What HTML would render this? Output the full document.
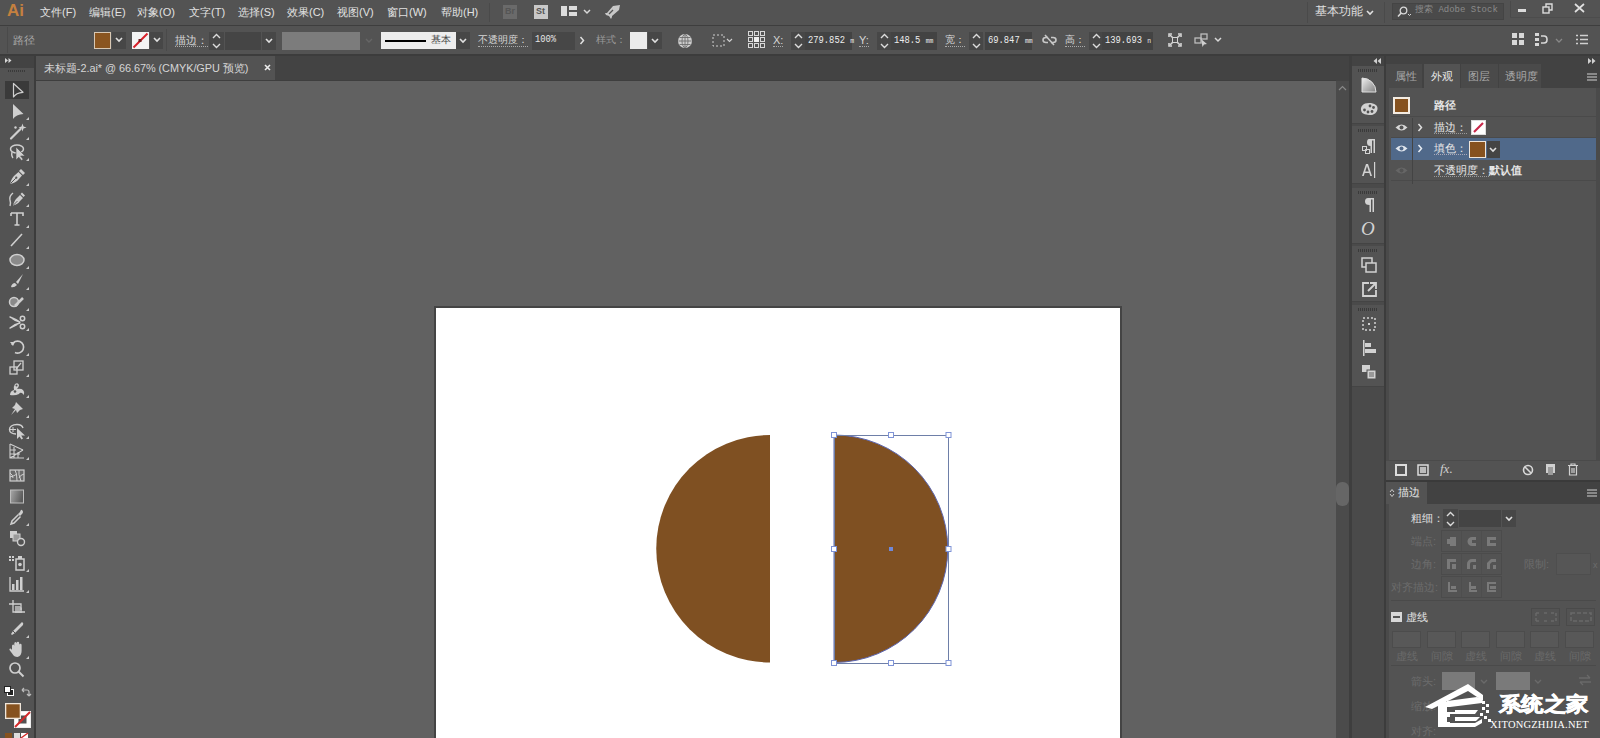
<!DOCTYPE html>
<html><head><meta charset="utf-8">
<style>
*{margin:0;padding:0;box-sizing:border-box}
html,body{width:1600px;height:738px;overflow:hidden;background:#535353;font-family:"Liberation Sans",sans-serif;color:#d6d6d6}
.a{position:absolute}
.t{position:absolute;white-space:nowrap;font-size:12px;line-height:14px}
svg{position:absolute;overflow:visible}
</style></head><body>

<!-- MENU BAR -->
<div class="a" style="left:0;top:0;width:1600px;height:25px;background:#535353"></div>
<div class="a" style="left:0;top:25px;width:1600px;height:1px;background:#3e3e3e"></div>
<div class="t" style="left:7px;top:2px;font-size:17px;line-height:18px;color:#c4803f;font-weight:bold">Ai</div>
<div class="t" style="left:40px;top:5px;font-size:11px;color:#e2e2e2">文件(F)</div>
<div class="t" style="left:89px;top:5px;font-size:11px;color:#e2e2e2">编辑(E)</div>
<div class="t" style="left:137px;top:5px;font-size:11px;color:#e2e2e2">对象(O)</div>
<div class="t" style="left:189px;top:5px;font-size:11px;color:#e2e2e2">文字(T)</div>
<div class="t" style="left:238px;top:5px;font-size:11px;color:#e2e2e2">选择(S)</div>
<div class="t" style="left:287px;top:5px;font-size:11px;color:#e2e2e2">效果(C)</div>
<div class="t" style="left:337px;top:5px;font-size:11px;color:#e2e2e2">视图(V)</div>
<div class="t" style="left:387px;top:5px;font-size:11px;color:#e2e2e2">窗口(W)</div>
<div class="t" style="left:441px;top:5px;font-size:11px;color:#e2e2e2">帮助(H)</div>
<div class="a" style="left:489px;top:3px;width:1px;height:19px;background:#4a4a4a"></div>
<div class="a" style="left:503px;top:5px;width:14px;height:14px;background:#6a6a6a"></div>
<div class="t" style="left:505px;top:6px;font-size:9px;line-height:11px;color:#555;font-weight:bold">Br</div>
<div class="a" style="left:534px;top:5px;width:14px;height:14px;background:#c8c8c8"></div>
<div class="t" style="left:536px;top:6px;font-size:9px;line-height:11px;color:#555;font-weight:bold">St</div>
<svg style="left:561px;top:6px" width="16" height="11"><g fill="#dcdcdc"><rect x="0" y="0" width="6" height="10"/><rect x="8" y="0" width="8" height="4"/><rect x="8" y="6" width="8" height="4"/></g></svg>
<svg style="left:583px;top:9px" width="8" height="6"><path d="M1 1L4 4L7 1" stroke="#d8d8d8" stroke-width="1.5" fill="none"/></svg>
<svg style="left:604px;top:4px" width="17" height="16"><path d="M16 1L9 2L3 9L1 9L2 11L5 12L7 15L8 13L8 12L15 6Z" fill="#c8c8c8"/><path d="M5 10L9 6" stroke="#535353" stroke-width="1.2"/></svg>
<!-- right side -->
<div class="a" style="left:1307px;top:2px;width:1px;height:21px;background:#4a4a4a"></div>
<div class="t" style="left:1315px;top:4px;font-size:11.5px;color:#e0e0e0">基本功能</div>
<svg style="left:1366px;top:10px" width="8" height="6"><path d="M1 1L4 4L7 1" stroke="#e0e0e0" stroke-width="1.6" fill="none"/></svg>
<div class="a" style="left:1384px;top:2px;width:1px;height:21px;background:#4a4a4a"></div>
<div class="a" style="left:1392px;top:3px;width:112px;height:17px;background:#4a4a4a;border:1px solid #444"></div>
<svg style="left:1396px;top:6px" width="16" height="12"><circle cx="7.5" cy="4.5" r="3.3" stroke="#d8d8d8" stroke-width="1.3" fill="none"/><path d="M5.2 7L2 10.5" stroke="#d8d8d8" stroke-width="1.6"/><path d="M12 8L13.5 9.5L15 8" stroke="#d8d8d8" fill="none"/></svg>
<div class="t" style="left:1415px;top:5px;font-size:9px;line-height:11px;color:#8a8a8a;font-family:'Liberation Mono',monospace">搜索 Adobe Stock</div>
<div class="a" style="left:1510px;top:1px;width:1px;height:16px;background:#4a4a4a"></div>
<div class="a" style="left:1518px;top:9px;width:8px;height:3px;background:#dcdcdc"></div>
<svg style="left:1542px;top:3px" width="12" height="11"><g stroke="#dcdcdc" stroke-width="1.4" fill="none"><rect x="1" y="4" width="6" height="6"/><path d="M4 4V1H10V7H7"/></g></svg>
<svg style="left:1574px;top:3px" width="11" height="10"><path d="M1 1L10 9M10 1L1 9" stroke="#e0e0e0" stroke-width="1.7"/></svg>
<div class="a" style="left:1510px;top:17px;width:90px;height:1px;background:#4c4c4c"></div>

<!-- CONTROL BAR -->
<div class="a" style="left:0;top:26px;width:1600px;height:29px;background:#535353"></div>
<div class="a" style="left:0;top:54px;width:1600px;height:2px;background:#3c3c3c"></div>
<div class="t" style="left:13px;top:33px;font-size:11px;color:#a8a8a8">路径</div>
<div class="a" style="left:7px;top:27px;width:1px;height:26px;background:#4a4a4a"></div>
<!-- fill swatch -->
<div class="a" style="left:94px;top:32px;width:17px;height:17px;background:#d8c8b4"></div>
<div class="a" style="left:95px;top:33px;width:15px;height:15px;background:#8a5520"></div>
<div class="a" style="left:112px;top:32px;width:14px;height:17px;background:#474747"></div>
<svg style="left:115px;top:37px" width="8" height="6"><path d="M1 1L4 4L7 1" stroke="#e0e0e0" stroke-width="1.6" fill="none"/></svg>
<!-- stroke swatch -->
<div class="a" style="left:132px;top:32px;width:17px;height:17px;background:#f4f4f4"></div>
<svg style="left:132px;top:32px" width="17" height="17"><path d="M1.5 15.5L15.5 1.5" stroke="#d8202a" stroke-width="2"/><rect x="6.5" y="7" width="3" height="3" fill="#702020"/></svg>
<div class="a" style="left:150px;top:32px;width:13px;height:17px;background:#474747"></div>
<svg style="left:153px;top:37px" width="8" height="6"><path d="M1 1L4 4L7 1" stroke="#e0e0e0" stroke-width="1.6" fill="none"/></svg>
<div class="a" style="left:166px;top:29px;width:1px;height:22px;background:#4a4a4a"></div>
<div class="t" style="left:175px;top:34px;font-size:10.5px;border-bottom:1px dotted #aaa;line-height:12px">描边：</div>
<div class="a" style="left:209px;top:32px;width:15px;height:18px;background:#474747"></div>
<svg style="left:212px;top:33px" width="9" height="16"><path d="M1 5L4.5 1.5L8 5M1 11L4.5 14.5L8 11" stroke="#dcdcdc" stroke-width="1.4" fill="none"/></svg>
<div class="a" style="left:225px;top:32px;width:36px;height:18px;background:#454545"></div>
<div class="a" style="left:262px;top:32px;width:14px;height:18px;background:#474747"></div>
<svg style="left:265px;top:38px" width="8" height="6"><path d="M1 1L4 4L7 1" stroke="#e0e0e0" stroke-width="1.6" fill="none"/></svg>
<div class="a" style="left:282px;top:32px;width:78px;height:18px;background:#7c7c7c"></div>
<svg style="left:365px;top:38px" width="8" height="6"><path d="M1 1L4 4L7 1" stroke="#666" stroke-width="1.4" fill="none"/></svg>
<!-- stroke style -->
<div class="a" style="left:381px;top:32px;width:75px;height:17px;background:#ededed"></div>
<div class="a" style="left:385px;top:40px;width:41px;height:2px;background:#000"></div>
<div class="t" style="left:431px;top:34px;font-size:10px;line-height:12px;color:#444">基本</div>
<div class="a" style="left:456px;top:32px;width:14px;height:17px;background:#474747"></div>
<svg style="left:459px;top:38px" width="8" height="6"><path d="M1 1L4 4L7 1" stroke="#e0e0e0" stroke-width="1.6" fill="none"/></svg>
<div class="t" style="left:478px;top:34px;font-size:10px;line-height:12px;border-bottom:1px dotted #aaa">不透明度：</div>
<div class="a" style="left:532px;top:32px;width:43px;height:18px;background:#474747"></div>
<div class="t" style="left:535px;top:33px;font-family:'Liberation Mono',monospace;font-size:11px;line-height:12px;color:#e8e8e8;transform:scaleX(0.8);transform-origin:0 0">100%</div>
<svg style="left:579px;top:36px" width="6" height="9"><path d="M1.5 1L4.5 4.5L1.5 8" stroke="#e0e0e0" stroke-width="1.5" fill="none"/></svg>
<div class="t" style="left:596px;top:34px;font-size:9.5px;line-height:12px;color:#9a9a9a">样式：</div>
<div class="a" style="left:630px;top:32px;width:17px;height:17px;background:#ececec"></div>
<div class="a" style="left:648px;top:32px;width:14px;height:17px;background:#474747"></div>
<svg style="left:651px;top:38px" width="8" height="6"><path d="M1 1L4 4L7 1" stroke="#e0e0e0" stroke-width="1.6" fill="none"/></svg>
<!-- globe -->
<svg style="left:677px;top:33px" width="16" height="16"><circle cx="8" cy="8" r="7" fill="#cdcdcd"/><g stroke="#6e6e6e" stroke-width="0.9" fill="none"><path d="M1.5 8H14.5M8 1.5V14.5M2.5 4.5H13.5M2.5 11.5H13.5"/><ellipse cx="8" cy="8" rx="3" ry="6.5"/></g></svg>
<!-- select rect icon -->
<svg style="left:712px;top:34px" width="22" height="13"><rect x="1" y="1" width="11" height="11" fill="none" stroke="#cfcfcf" stroke-dasharray="2 2"/><path d="M15 5L17.5 7.5L20 5" stroke="#cfcfcf" stroke-width="1.2" fill="none"/></svg>
<!-- ref point -->
<svg style="left:748px;top:31px" width="18" height="18"><g fill="none" stroke="#d8d8d8" stroke-width="1"><rect x="0.5" y="0.5" width="4" height="4"/><rect x="6.5" y="0.5" width="4" height="4"/><rect x="12.5" y="0.5" width="4" height="4"/><rect x="0.5" y="6.5" width="4" height="4"/><rect x="12.5" y="6.5" width="4" height="4"/><rect x="0.5" y="12.5" width="4" height="4"/><rect x="6.5" y="12.5" width="4" height="4"/><rect x="12.5" y="12.5" width="4" height="4"/></g><rect x="6" y="6" width="5" height="5" fill="#eee"/></svg>
<div class="t" style="left:773px;top:34px;font-size:11px;line-height:12px;border-bottom:1px dotted #aaa">X:</div>
<div class="a" style="left:791px;top:32px;width:14px;height:18px;background:#474747"></div><svg style="left:794px;top:33px" width="9" height="16"><path d="M1 5L4.5 1.5L8 5M1 11L4.5 14.5L8 11" stroke="#dcdcdc" stroke-width="1.4" fill="none"/></svg>
<div class="a" style="left:805px;top:32px;width:47px;height:18px;background:#434343"></div><div class="t" style="left:808px;top:34px;font-family:'Liberation Mono',monospace;font-size:11px;line-height:12px;color:#ececec;transform:scaleX(0.8);transform-origin:0 0">279.852 <span style="font-size:8px">m</span></div>
<div class="t" style="left:859px;top:34px;font-size:11px;line-height:12px;border-bottom:1px dotted #aaa">Y:</div>
<div class="a" style="left:877px;top:32px;width:14px;height:18px;background:#474747"></div><svg style="left:880px;top:33px" width="9" height="16"><path d="M1 5L4.5 1.5L8 5M1 11L4.5 14.5L8 11" stroke="#dcdcdc" stroke-width="1.4" fill="none"/></svg>
<div class="a" style="left:891px;top:32px;width:46px;height:18px;background:#434343"></div><div class="t" style="left:894px;top:34px;font-family:'Liberation Mono',monospace;font-size:11px;line-height:12px;color:#ececec;transform:scaleX(0.8);transform-origin:0 0">148.5 <span style="font-size:8px">mm</span></div>
<div class="t" style="left:945px;top:34px;font-size:10px;line-height:12px;border-bottom:1px dotted #aaa">宽：</div>
<div class="a" style="left:969px;top:32px;width:14px;height:18px;background:#474747"></div><svg style="left:972px;top:33px" width="9" height="16"><path d="M1 5L4.5 1.5L8 5M1 11L4.5 14.5L8 11" stroke="#dcdcdc" stroke-width="1.4" fill="none"/></svg>
<div class="a" style="left:985px;top:32px;width:47px;height:18px;background:#434343"></div><div class="t" style="left:988px;top:34px;font-family:'Liberation Mono',monospace;font-size:11px;line-height:12px;color:#ececec;transform:scaleX(0.8);transform-origin:0 0">69.847 <span style="font-size:8px">mm</span></div>
<svg style="left:1042px;top:34px" width="15" height="12"><g stroke="#c8c8c8" stroke-width="1.6" fill="none"><path d="M6 3.5H4Q1 3.5 1 6Q1 8.5 4 8.5H6"/><path d="M9 3.5H11Q14 3.5 14 6Q14 8.5 11 8.5H9"/><path d="M3 1L12 11"/></g></svg>
<div class="t" style="left:1065px;top:34px;font-size:10px;line-height:12px;border-bottom:1px dotted #aaa">高：</div>
<div class="a" style="left:1089px;top:32px;width:14px;height:18px;background:#474747"></div><svg style="left:1092px;top:33px" width="9" height="16"><path d="M1 5L4.5 1.5L8 5M1 11L4.5 14.5L8 11" stroke="#dcdcdc" stroke-width="1.4" fill="none"/></svg>
<div class="a" style="left:1102px;top:32px;width:51px;height:18px;background:#434343"></div><div class="t" style="left:1105px;top:34px;font-family:'Liberation Mono',monospace;font-size:11px;line-height:12px;color:#ececec;transform:scaleX(0.8);transform-origin:0 0">139.693 <span style="font-size:8px">n</span></div>
<svg style="left:1168px;top:33px" width="14" height="14"><g stroke="#d4d4d4" stroke-width="1.6" fill="none"><path d="M1 4V1H4M10 1H13V4M13 10V13H10M4 13H1V10"/><path d="M2 2L5 5M12 2L9 5M12 12L9 9M2 12L5 9"/></g><rect x="4.5" y="4.5" width="5" height="5" fill="none" stroke="#d4d4d4"/></svg>
<svg style="left:1194px;top:32px" width="16" height="16"><g stroke="#bdbdbd" stroke-width="1.3" fill="none"><rect x="1" y="6" width="6" height="5"/><rect x="7" y="2" width="6" height="5"/></g><path d="M7 7L13 12L10 12.5L8.5 15Z" fill="#cfcfcf"/></svg>
<svg style="left:1214px;top:37px" width="8" height="6"><path d="M1 1L4 4L7 1" stroke="#d8d8d8" stroke-width="1.5" fill="none"/></svg>
<!-- right controls -->
<svg style="left:1512px;top:33px" width="12" height="12"><g fill="#d8d8d8"><rect x="0" y="0" width="5" height="5"/><rect x="7" y="0" width="5" height="5"/><rect x="0" y="7" width="5" height="5"/><rect x="7" y="7" width="5" height="5"/></g></svg>
<svg style="left:1535px;top:33px" width="16" height="14"><g fill="#d8d8d8"><rect x="0" y="0" width="4" height="3"/><rect x="0" y="5" width="4" height="3"/><rect x="0" y="10" width="4" height="3"/></g><path d="M6 3H9Q12 3 12 6.5Q12 10 9 10H6" stroke="#d8d8d8" stroke-width="1.6" fill="none"/></svg>
<svg style="left:1555px;top:38px" width="8" height="6"><path d="M1 1L4 4L7 1" stroke="#888" stroke-width="1.3" fill="none"/></svg>
<svg style="left:1576px;top:34px" width="12" height="11"><g stroke="#d0d0d0" stroke-width="1.4"><path d="M0 1.5H2M0 5.5H2M0 9.5H2M4 1.5H12M4 5.5H12M4 9.5H12"/></g></svg>

<!-- TAB BAR -->
<div class="a" style="left:0;top:56px;width:1600px;height:25px;background:#434343"></div>
<div class="a" style="left:36px;top:56px;width:239px;height:24px;background:#535353"></div>
<div class="a" style="left:36px;top:80px;width:1300px;height:1px;background:#3e3e3e"></div>
<div class="t" id="tabt" style="left:44px;top:61px;font-size:10.9px;letter-spacing:-0.05px">未标题-2.ai* @ 66.67% (CMYK/GPU 预览)</div>
<svg style="left:264px;top:64px" width="7" height="7"><path d="M1 1L6 6M6 1L1 6" stroke="#ececec" stroke-width="1.6"/></svg>

<!-- TOOLBAR -->
<div class="a" style="left:0;top:56px;width:34px;height:682px;background:#535353"></div>
<div class="a" style="left:0;top:56px;width:34px;height:12px;background:#434343"></div>
<div class="a" style="left:34px;top:56px;width:2px;height:682px;background:#3c3c3c"></div>
<div class="a" style="left:5px;top:81px;width:24px;height:18px;background:#3a3a3a"></div>
<svg style="left:5px;top:58px" width="7" height="5"><path d="M0 0L3 2.5L0 5ZM3.5 0L6.5 2.5L3.5 5Z" fill="#d8d8d8"/></svg>
<div class="a" style="left:8px;top:70px;width:18px;height:2px;background:repeating-linear-gradient(90deg,#3a3a3a 0 1px,transparent 1px 2px)"></div>
<svg style="left:7px;top:80px" width="20" height="20"><path d="M6.5 3.5V17Q9 12.8 16 12.3Z" fill="none" stroke="#cfcfcf" stroke-width="1.2" stroke-linejoin="round"/></svg>
<svg style="left:7px;top:101px" width="20" height="20"><path d="M6 3V18Q9 13.5 16.5 13Z" fill="#cfcfcf"/></svg>
<svg style="left:26px;top:117px" width="3" height="3"><path d="M3 0V3H0Z" fill="#c8c8c8"/></svg>
<svg style="left:7px;top:121px" width="20" height="20"><path d="M4 17.5L13.5 8" stroke="#cfcfcf" stroke-width="2.2" stroke-linecap="round"/><path d="M15.5 2.5L16.5 5.5L19.5 6.5L16.5 7.5L15.5 10.5L14.5 7.5L11.5 6.5L14.5 5.5Z" fill="#cfcfcf"/><circle cx="8.5" cy="6.5" r="1.2" fill="#cfcfcf"/></svg>
<svg style="left:26px;top:137px" width="3" height="3"><path d="M3 0V3H0Z" fill="#c8c8c8"/></svg>
<svg style="left:7px;top:142px" width="20" height="20"><ellipse cx="10" cy="7" rx="6.5" ry="4" fill="none" stroke="#cfcfcf" stroke-width="1.5"/><path d="M5 10Q4 14 6 16" stroke="#cfcfcf" stroke-width="1.3" fill="none"/><path d="M9 5V18L11.8 15.2L14.5 18.5L16.2 17.3L13.6 14H18Z" fill="#cfcfcf" stroke="#535353" stroke-width="0.6"/></svg>
<svg style="left:26px;top:158px" width="3" height="3"><path d="M3 0V3H0Z" fill="#c8c8c8"/></svg>
<svg style="left:7px;top:167px" width="20" height="20"><path d="M3 17Q4.5 11 7.5 8.5L11.5 5L15 8.5L11.5 12.5Q9 15.5 3 17Z" fill="#cfcfcf"/><path d="M12 4L14 2L18 6L16 8Z" fill="#cfcfcf"/><path d="M3.5 16.5L8.8 11.2" stroke="#535353" stroke-width="1"/><circle cx="9.3" cy="10.7" r="1.1" fill="#535353"/></svg>
<svg style="left:26px;top:183px" width="3" height="3"><path d="M3 0V3H0Z" fill="#c8c8c8"/></svg>
<svg style="left:7px;top:188px" width="20" height="20"><path d="M6 17.5Q7.5 12 10 10L13 7L16 10L13 13Q11 16 6 17.5Z" fill="#cfcfcf"/><path d="M13.5 6L15 4.5L18 7.5L16.5 9Z" fill="#cfcfcf"/><path d="M6.5 17L10.5 13" stroke="#535353" stroke-width="0.9"/><path d="M6 5Q2 8 3 12Q4 15 3 18" stroke="#cfcfcf" stroke-width="1.4" fill="none"/></svg>
<svg style="left:26px;top:204px" width="3" height="3"><path d="M3 0V3H0Z" fill="#c8c8c8"/></svg>
<svg style="left:7px;top:209px" width="20" height="20"><path d="M4 4H16V7M4 4V7M10 4V16M7.5 16H12.5" stroke="#cfcfcf" stroke-width="1.6" fill="none"/></svg>
<svg style="left:26px;top:225px" width="3" height="3"><path d="M3 0V3H0Z" fill="#c8c8c8"/></svg>
<svg style="left:7px;top:230px" width="20" height="20"><path d="M4 16L15 4" stroke="#cfcfcf" stroke-width="1.6"/></svg>
<svg style="left:26px;top:246px" width="3" height="3"><path d="M3 0V3H0Z" fill="#c8c8c8"/></svg>
<svg style="left:7px;top:250px" width="20" height="20"><ellipse cx="10" cy="10" rx="7" ry="5.5" fill="#8a8a8a" stroke="#cfcfcf" stroke-width="1.5"/></svg>
<svg style="left:26px;top:266px" width="3" height="3"><path d="M3 0V3H0Z" fill="#c8c8c8"/></svg>
<svg style="left:7px;top:271px" width="20" height="20"><path d="M16 3L9 11L11 13Z" fill="#cfcfcf"/><path d="M8 12Q5 12 4 16Q7 17 10 14Z" fill="#cfcfcf"/></svg>
<svg style="left:26px;top:287px" width="3" height="3"><path d="M3 0V3H0Z" fill="#c8c8c8"/></svg>
<svg style="left:7px;top:292px" width="20" height="20"><circle cx="7" cy="10" r="4.5" fill="#8a8a8a" stroke="#cfcfcf" stroke-width="1.5"/><path d="M8 14L16 6" stroke="#cfcfcf" stroke-width="2.5"/></svg>
<svg style="left:26px;top:308px" width="3" height="3"><path d="M3 0V3H0Z" fill="#c8c8c8"/></svg>
<svg style="left:7px;top:312px" width="20" height="20"><path d="M3 5Q8 7 13 10Q8 9 3 5ZM3 16Q8 14 13 11Q8 12 3 16Z" fill="#cfcfcf" stroke="#cfcfcf" stroke-width="1.4" stroke-linejoin="round"/><circle cx="15.5" cy="6.5" r="2.2" fill="none" stroke="#cfcfcf" stroke-width="1.5"/><circle cx="15.5" cy="14.5" r="2.2" fill="none" stroke="#cfcfcf" stroke-width="1.5"/></svg>
<svg style="left:26px;top:328px" width="3" height="3"><path d="M3 0V3H0Z" fill="#c8c8c8"/></svg>
<svg style="left:7px;top:337px" width="20" height="20"><path d="M5 8A6 6 0 1 1 8 15.5" stroke="#cfcfcf" stroke-width="1.6" fill="none"/><path d="M3 5L6 9L8 5Z" fill="#cfcfcf"/></svg>
<svg style="left:26px;top:353px" width="3" height="3"><path d="M3 0V3H0Z" fill="#c8c8c8"/></svg>
<svg style="left:7px;top:358px" width="20" height="20"><rect x="3" y="9" width="7" height="7" fill="none" stroke="#cfcfcf" stroke-width="1.3"/><rect x="7" y="3" width="9" height="9" fill="none" stroke="#cfcfcf" stroke-width="1.3"/><path d="M9 11L14 5" stroke="#cfcfcf" stroke-width="1.2"/></svg>
<svg style="left:26px;top:374px" width="3" height="3"><path d="M3 0V3H0Z" fill="#c8c8c8"/></svg>
<svg style="left:7px;top:379px" width="20" height="20"><path d="M3 16Q3 12 7 11Q6 8 8 5Q11 3 12 6Q12 8 10 10Q14 9 16 11Q18 13 17 16L15 14Q13 13 12 15Q8 17 3 16Z" fill="#cfcfcf"/><circle cx="8" cy="12.5" r="1.3" fill="#535353"/><circle cx="9.5" cy="6.5" r="1" fill="#535353"/></svg>
<svg style="left:26px;top:395px" width="3" height="3"><path d="M3 0V3H0Z" fill="#c8c8c8"/></svg>
<svg style="left:7px;top:399px" width="20" height="20"><path d="M9 3L16 10L13 11L10 14L9 11L4 16L8 10L5 9L8 6Z" fill="#cfcfcf"/></svg>
<svg style="left:26px;top:415px" width="3" height="3"><path d="M3 0V3H0Z" fill="#c8c8c8"/></svg>
<svg style="left:7px;top:420px" width="20" height="20"><path d="M10 4.5C5 4.5 2.5 7 2.5 9.5C2.5 12 5 14 9 14" stroke="#cfcfcf" stroke-width="1.4" fill="none"/><path d="M10 4.5Q15 4.5 16 8" stroke="#cfcfcf" stroke-width="1.4" fill="none"/><path d="M6 7V12M3 9.5H9" stroke="#cfcfcf" stroke-width="1"/><path d="M10 8V19L12.5 16.5L14.5 19.5L16 18.5L14.2 15.5H18Z" fill="#cfcfcf"/></svg>
<svg style="left:26px;top:436px" width="3" height="3"><path d="M3 0V3H0Z" fill="#c8c8c8"/></svg>
<svg style="left:7px;top:441px" width="20" height="20"><path d="M3 3V17H17M3 17L16 9M3 13H13M3 9H9M7 6V17M11 11V17" stroke="#cfcfcf" stroke-width="1.1" fill="none"/><path d="M3 3L16 9" stroke="#cfcfcf" stroke-width="1.1"/></svg>
<svg style="left:26px;top:457px" width="3" height="3"><path d="M3 0V3H0Z" fill="#c8c8c8"/></svg>
<svg style="left:7px;top:465px" width="20" height="20"><rect x="3" y="5" width="14" height="11" fill="#6a6a6a" stroke="#cfcfcf" stroke-width="1.2"/><path d="M3 8Q6 10 6 13M8 5Q10 8 10 16M12 5Q11 9 14 16M17 9Q13 10 12 13M3 12Q7 11 10 9" stroke="#cfcfcf" stroke-width="1" fill="none"/></svg>
<svg style="left:7px;top:486px" width="20" height="20"><defs><linearGradient id="gg2" x1="0" y1="0" x2="1" y2="0.3"><stop offset="0" stop-color="#a8a8a8"/><stop offset="1" stop-color="#5a5a5a"/></linearGradient></defs><rect x="3.5" y="4" width="13" height="13" fill="url(#gg2)" stroke="#bdbdbd" stroke-width="1"/></svg>
<svg style="left:7px;top:507px" width="20" height="20"><path d="M15 3Q17 5 15 7L13 9L11 7L13 5Q14 2 15 3Z" fill="#cfcfcf"/><path d="M11.5 7.5L5 14L4 17L7 16L13.5 9.5" stroke="#cfcfcf" stroke-width="1.5" fill="none"/></svg>
<svg style="left:26px;top:523px" width="3" height="3"><path d="M3 0V3H0Z" fill="#c8c8c8"/></svg>
<svg style="left:7px;top:528px" width="20" height="20"><rect x="3" y="3" width="7" height="7" fill="#cfcfcf"/><rect x="6" y="6" width="7" height="7" fill="#9a9a9a" stroke="#cfcfcf"/><circle cx="14" cy="14" r="3.5" fill="#535353" stroke="#cfcfcf" stroke-width="1.4"/></svg>
<svg style="left:7px;top:553px" width="20" height="20"><g fill="#cfcfcf"><rect x="2" y="3" width="2" height="2"/><rect x="5" y="3" width="2" height="2"/><rect x="2" y="6" width="2" height="2"/><rect x="5" y="6" width="2" height="2"/></g><rect x="9" y="6" width="8" height="11" fill="none" stroke="#cfcfcf" stroke-width="1.5"/><rect x="11" y="3" width="4" height="3" fill="#cfcfcf"/><circle cx="13" cy="11.5" r="1.8" fill="#cfcfcf"/></svg>
<svg style="left:26px;top:569px" width="3" height="3"><path d="M3 0V3H0Z" fill="#c8c8c8"/></svg>
<svg style="left:7px;top:574px" width="20" height="20"><path d="M3 3V17H17" stroke="#cfcfcf" stroke-width="1.3" fill="none"/><g fill="#cfcfcf"><rect x="5" y="10" width="2.5" height="6"/><rect x="9" y="6" width="2.5" height="10"/><rect x="13" y="3" width="2.5" height="13"/></g></svg>
<svg style="left:26px;top:590px" width="3" height="3"><path d="M3 0V3H0Z" fill="#c8c8c8"/></svg>
<svg style="left:7px;top:598px" width="20" height="20"><path d="M6 2V14H18M2 6H14V12" stroke="#cfcfcf" stroke-width="1.3" fill="none"/><path d="M8 8H13L15 10V15H8Z" fill="#cfcfcf" opacity=".7"/></svg>
<svg style="left:7px;top:619px" width="20" height="20"><path d="M15 3Q17 4 16 6L8 14L5 16L4 15L6 12L14 4Z" fill="#cfcfcf"/><path d="M6 12L9 15" stroke="#535353"/></svg>
<svg style="left:26px;top:635px" width="3" height="3"><path d="M3 0V3H0Z" fill="#c8c8c8"/></svg>
<svg style="left:7px;top:640px" width="20" height="20"><path d="M5 10V6Q5 4.5 6.2 4.5Q7.3 4.5 7.3 6V3.5Q7.3 2 8.5 2Q9.7 2 9.7 3.5V3Q9.7 1.8 11 1.8Q12.2 1.8 12.2 3V5Q12.2 3.8 13.4 3.8Q14.6 3.8 14.6 5V11Q14.6 16 10.5 17Q7 17 5.5 14L2.5 10Q2 8.8 3.2 8.5Q4.2 8.3 5 10Z" fill="#cfcfcf"/></svg>
<svg style="left:26px;top:656px" width="3" height="3"><path d="M3 0V3H0Z" fill="#c8c8c8"/></svg>
<svg style="left:7px;top:660px" width="20" height="20"><circle cx="8" cy="8" r="5" fill="none" stroke="#cfcfcf" stroke-width="1.7"/><path d="M11.5 11.5L16.5 16.5" stroke="#cfcfcf" stroke-width="2"/></svg>

<!-- small default & swap -->
<svg style="left:4px;top:686px" width="10" height="10"><rect x="3.5" y="3.5" width="6" height="6" fill="#222" stroke="#fff"/><rect x="0.5" y="0.5" width="6" height="6" fill="#fff" stroke="#222"/></svg>
<svg style="left:21px;top:687px" width="10" height="10"><path d="M1 3H6Q8 3 8 5V9M1 3L3 1M1 3L3 5M8 9L6 7M8 9L10 7" stroke="#bbb" stroke-width="1.2" fill="none"/></svg>
<!-- fill / stroke swatches -->
<svg style="left:3px;top:702px" width="28" height="30">
<rect x="11.5" y="9.5" width="16" height="16" fill="#fff" stroke="#eee"/>
<rect x="15.5" y="13.5" width="8" height="8" fill="#535353"/>
<path d="M12 25L27 10" stroke="#d42a2a" stroke-width="2"/>
<rect x="2" y="1" width="16" height="16" fill="#f0e6da"/>
<rect x="3.3" y="2.3" width="13.4" height="13.4" fill="#86521f"/>
</svg>
<div class="a" style="left:5px;top:733px;width:7px;height:5px;background:#86521f"></div>
<div class="a" style="left:14px;top:733px;width:6px;height:5px;background:#ddd"></div>
<svg style="left:21px;top:732px" width="8" height="6"><rect x="0" y="1" width="7" height="5" fill="#fff"/><path d="M0 6L7 1" stroke="#d42a2a" stroke-width="1.5"/></svg>

<!-- CANVAS -->
<div class="a" style="left:36px;top:81px;width:1300px;height:657px;background:#616161"></div>
<div class="a" style="left:434px;top:306px;width:688px;height:440px;background:#444"></div>
<div class="a" style="left:436px;top:308px;width:684px;height:440px;background:#fff"></div>
<svg style="left:0;top:0" width="1600" height="738">
<path d="M770 435 A113.75 113.75 0 0 0 770 662.5 Z" fill="#7f5022"/>
<path d="M834 435 A113.75 113.75 0 0 1 834 662.5 Z" fill="#7f5022" stroke="#5d66b0" stroke-width="1"/>
<rect x="834.5" y="435.5" width="114" height="228" fill="none" stroke="#6e7fa8" stroke-width="1"/>
<g fill="#fff" stroke="#7f93d6" stroke-width="1">
<rect x="831.5" y="432.5" width="5" height="5"/><rect x="888.5" y="432.5" width="5" height="5"/><rect x="946" y="432.5" width="5" height="5"/>
<rect x="831.5" y="546.5" width="5" height="5"/><rect x="946" y="546.5" width="5" height="5"/>
<rect x="831.5" y="660.5" width="5" height="5"/><rect x="888.5" y="660.5" width="5" height="5"/><rect x="946" y="660.5" width="5" height="5"/>
</g>
<rect x="889" y="547" width="4" height="4" fill="#7088d8"/>
</svg>

<!-- DOCK -->
<div class="a" style="left:1336px;top:81px;width:13px;height:657px;background:#4b4b4b"></div>
<div class="a" style="left:1336px;top:482px;width:13px;height:24px;background:#666;border-radius:6px"></div>
<svg style="left:1338px;top:85px" width="9" height="6"><path d="M1 5L4.5 1.5L8 5" stroke="#888" stroke-width="1.2" fill="none"/></svg>
<div class="a" style="left:1349px;top:56px;width:3px;height:682px;background:#3e3e3e"></div>
<div class="a" style="left:1352px;top:56px;width:32px;height:682px;background:#4a4a4a"></div>
<div class="a" style="left:1352px;top:56px;width:32px;height:10px;background:#434343"></div>
<svg style="left:1373px;top:58px" width="8" height="6"><path d="M4 0L0.5 3L4 6ZM8 0L4.5 3L8 6Z" fill="#d0d0d0"/></svg>
<div class="a" style="left:1352px;top:66px;width:32px;height:58px;background:#535353;border-bottom:1px solid #444"></div>
<div class="a" style="left:1358px;top:69px;width:19px;height:3px;background:repeating-linear-gradient(90deg,#3a3a3a 0 1px,transparent 1px 2px)"></div>
<div class="a" style="left:1352px;top:126px;width:32px;height:58px;background:#535353;border-bottom:1px solid #444"></div>
<div class="a" style="left:1358px;top:129px;width:19px;height:3px;background:repeating-linear-gradient(90deg,#3a3a3a 0 1px,transparent 1px 2px)"></div>
<div class="a" style="left:1352px;top:188px;width:32px;height:56px;background:#535353;border-bottom:1px solid #444"></div>
<div class="a" style="left:1358px;top:191px;width:19px;height:3px;background:repeating-linear-gradient(90deg,#3a3a3a 0 1px,transparent 1px 2px)"></div>
<div class="a" style="left:1352px;top:246px;width:32px;height:56px;background:#535353;border-bottom:1px solid #444"></div>
<div class="a" style="left:1358px;top:249px;width:19px;height:3px;background:repeating-linear-gradient(90deg,#3a3a3a 0 1px,transparent 1px 2px)"></div>
<div class="a" style="left:1352px;top:305px;width:32px;height:82px;background:#535353;border-bottom:1px solid #444"></div>
<div class="a" style="left:1358px;top:308px;width:19px;height:3px;background:repeating-linear-gradient(90deg,#3a3a3a 0 1px,transparent 1px 2px)"></div>
<svg style="left:1360px;top:77px" width="18" height="18"><defs><linearGradient id="dq" x1="0" y1="0" x2="1" y2="1"><stop offset="0" stop-color="#f0f0f0"/><stop offset="1" stop-color="#808080"/></linearGradient></defs><path d="M2 1V15H16A14 14 0 0 0 2 1Z" fill="url(#dq)" stroke="#e0e0e0" stroke-width="1"/></svg>
<svg style="left:1360px;top:101px" width="18" height="18"><path d="M9 2C3 2 0.5 5.5 1 9C1.5 13 5 13.5 9 14C13.5 14.5 17 12 17.5 8C18 4.5 14.5 2 9 2Z" fill="#d2d2d2"/><g fill="#535353"><circle cx="4.5" cy="9" r="1.4"/><circle cx="8" cy="11" r="1.4"/><circle cx="12" cy="10.5" r="1.4"/><circle cx="13.5" cy="6.5" r="1.4"/><circle cx="10" cy="5" r="1.4"/></g></svg>
<svg style="left:1360px;top:137px" width="18" height="18"><path d="M9 2H15V16H13.5V3.5H12V16H10.5V9Q7 9 7 5.5Q7 2 9 2Z" fill="#d2d2d2"/><rect x="2.5" y="9.5" width="4" height="4" fill="none" stroke="#d2d2d2"/><rect x="5.5" y="12.5" width="4" height="4" fill="none" stroke="#d2d2d2"/></svg>
<svg style="left:1360px;top:161px" width="18" height="18"><path d="M2 15L6 3H8L12 15H10.3L9.3 12H4.7L3.7 15ZM5.2 10.5H8.8L7 5Z" fill="#d2d2d2"/><rect x="14" y="1" width="1.2" height="16" fill="#d2d2d2"/></svg>
<svg style="left:1360px;top:196px" width="18" height="18"><path d="M8 2H14V16H12.5V3.5H11V16H9.5V9Q5 9 5 5.5Q5 2 8 2Z" fill="#d2d2d2"/></svg>
<div class="t" style="left:1361px;top:219px;font-family:'Liberation Serif',serif;font-style:italic;font-size:19px;line-height:20px;color:#d2d2d2">O</div>
<svg style="left:1360px;top:256px" width="18" height="18"><rect x="2" y="2" width="10" height="9" fill="none" stroke="#d2d2d2" stroke-width="1.5"/><rect x="6" y="7" width="10" height="9" fill="#535353" stroke="#d2d2d2" stroke-width="1.5"/></svg>
<svg style="left:1360px;top:280px" width="18" height="18"><path d="M9 3H3V16H16V10" stroke="#d2d2d2" stroke-width="1.8" fill="none"/><path d="M8 11L15 4M10 3H16V9" stroke="#d2d2d2" stroke-width="1.8" fill="none"/></svg>
<svg style="left:1360px;top:315px" width="18" height="18"><rect x="3" y="3" width="12" height="12" fill="none" stroke="#d2d2d2" stroke-width="1.5" stroke-dasharray="2 2"/><rect x="8" y="8" width="2" height="2" fill="#d2d2d2"/></svg>
<svg style="left:1360px;top:339px" width="18" height="18"><rect x="3" y="1" width="1.5" height="16" fill="#d2d2d2"/><rect x="5" y="4" width="6" height="4" fill="#d2d2d2"/><rect x="5" y="10" width="11" height="4" fill="#d2d2d2"/></svg>
<svg style="left:1360px;top:363px" width="18" height="18"><rect x="2" y="2" width="8" height="7" fill="#d2d2d2"/><rect x="7" y="7" width="9" height="9" fill="#d2d2d2" stroke="#535353" stroke-width="1"/><rect x="9" y="9" width="5" height="5" fill="#999"/></svg>

<!-- PANEL -->
<div class="a" style="left:1384px;top:56px;width:2px;height:682px;background:#3c3c3c"></div>
<div class="a" style="left:1386px;top:56px;width:214px;height:682px;background:#535353"></div>
<div class="a" style="left:1386px;top:56px;width:214px;height:32px;background:#424242"></div>
<svg style="left:1588px;top:58px" width="8" height="6"><path d="M0 0L3.5 3L0 6ZM4 0L7.5 3L4 6Z" fill="#d0d0d0"/></svg>
<div class="a" style="left:1386px;top:64px;width:36px;height:24px;background:#4a4a4a"></div>
<div class="a" style="left:1424px;top:64px;width:36px;height:24px;background:#535353"></div>
<div class="a" style="left:1461px;top:64px;width:37px;height:24px;background:#4a4a4a"></div>
<div class="a" style="left:1499px;top:64px;width:42px;height:24px;background:#4a4a4a"></div>
<div class="t" style="left:1395px;top:70px;font-size:11px;line-height:13px;color:#a8a8a8">属性</div>
<div class="t" style="left:1431px;top:70px;font-size:11px;line-height:13px;color:#e6e6e6">外观</div>
<div class="t" style="left:1468px;top:70px;font-size:11px;line-height:13px;color:#a8a8a8">图层</div>
<div class="t" style="left:1505px;top:70px;font-size:11px;line-height:13px;color:#a8a8a8">透明度</div>
<svg style="left:1587px;top:73px" width="10" height="8"><path d="M0 1H10M0 4H10M0 7H10" stroke="#cfcfcf" stroke-width="1.2"/></svg>
<!-- appearance body -->
<div class="a" style="left:1386px;top:88px;width:214px;height:372px;background:#535353"></div>
<div class="a" style="left:1386px;top:88px;width:3px;height:372px;background:#4a4a4a"></div>
<div class="a" style="left:1596px;top:88px;width:4px;height:372px;background:#4a4a4a"></div>
<!-- row1 -->
<div class="a" style="left:1391px;top:95px;width:205px;height:22px;background:#535353;border-bottom:1px solid #4a4a4a"></div>
<div class="a" style="left:1393px;top:97px;width:17px;height:17px;background:#f4ece2"></div>
<div class="a" style="left:1395px;top:99px;width:13px;height:13px;background:#86521f"></div>
<div class="t" style="left:1434px;top:99px;font-size:11px;line-height:13px;color:#e6e6e6;font-weight:bold">路径</div>
<!-- row2 -->
<div class="a" style="left:1391px;top:118px;width:205px;height:20px;border-bottom:1px solid #4a4a4a"></div>
<svg style="left:1395px;top:123px" width="13" height="9"><path d="M0.5 4.5Q6.5 -1.5 12.5 4.5Q6.5 10.5 0.5 4.5Z" fill="#d8d8d8"/><circle cx="6.5" cy="4.5" r="2" fill="#535353"/></svg>
<svg style="left:1417px;top:123px" width="6" height="9"><path d="M1.5 1L4.5 4.5L1.5 8" stroke="#e0e0e0" stroke-width="1.5" fill="none"/></svg>
<div class="t" style="left:1434px;top:121px;font-size:10.5px;line-height:12px;color:#e6e6e6;border-bottom:1px dotted #999">描边：</div>
<div class="a" style="left:1471px;top:120px;width:15px;height:15px;background:#fff;border:1px solid #ddd"></div>
<svg style="left:1471px;top:120px" width="15" height="15"><path d="M3 12L12 3" stroke="#c8284a" stroke-width="2.2"/></svg>
<!-- row3 highlighted -->
<div class="a" style="left:1391px;top:138px;width:205px;height:22px;background:#50698a"></div>
<svg style="left:1395px;top:144px" width="13" height="9"><path d="M0.5 4.5Q6.5 -1.5 12.5 4.5Q6.5 10.5 0.5 4.5Z" fill="#e0e6ee"/><circle cx="6.5" cy="4.5" r="2" fill="#50698a"/></svg>
<svg style="left:1417px;top:144px" width="6" height="9"><path d="M1.5 1L4.5 4.5L1.5 8" stroke="#e8eef4" stroke-width="1.5" fill="none"/></svg>
<div class="t" style="left:1434px;top:142px;font-size:10.5px;line-height:12px;color:#e6e6e6;border-bottom:1px dotted #aab">填色：</div>
<div class="a" style="left:1469px;top:141px;width:17px;height:17px;background:#f0e6da"></div>
<div class="a" style="left:1470px;top:142px;width:15px;height:15px;background:#86521f"></div>
<div class="a" style="left:1487px;top:141px;width:13px;height:17px;background:#444"></div>
<svg style="left:1489px;top:147px" width="8" height="6"><path d="M1 1L4 4L7 1" stroke="#e0e0e0" stroke-width="1.6" fill="none"/></svg>
<!-- row4 -->
<div class="a" style="left:1391px;top:160px;width:205px;height:21px;border-bottom:1px solid #4a4a4a"></div>
<svg style="left:1395px;top:166px" width="13" height="9"><path d="M0.5 4.5Q6.5 -1.5 12.5 4.5Q6.5 10.5 0.5 4.5Z" fill="#666"/><circle cx="6.5" cy="4.5" r="2" fill="#535353"/></svg>
<div class="t" style="left:1434px;top:164px;font-size:10.5px;line-height:12px;color:#e6e6e6;border-bottom:1px dotted #999">不透明度：</div>
<div class="t" style="left:1489px;top:164px;font-size:10.5px;line-height:12px;color:#e6e6e6;font-weight:bold">默认值</div>
<div class="a" style="left:1412px;top:118px;width:1px;height:66px;background:#444"></div>
<!-- bottom bar of appearance -->
<div class="a" style="left:1386px;top:460px;width:214px;height:20px;background:#535353;border-top:1px solid #4a4a4a"></div>
<svg style="left:1395px;top:464px" width="12" height="12"><rect x="1" y="1" width="10" height="10" fill="none" stroke="#dcdcdc" stroke-width="2"/></svg>
<svg style="left:1417px;top:464px" width="12" height="12"><rect x="1" y="1" width="10" height="10" fill="none" stroke="#dcdcdc" stroke-width="1.5"/><rect x="3" y="3" width="6" height="6" fill="#bbb"/></svg>
<div class="t" style="left:1440px;top:462px;font-family:'Liberation Serif',serif;font-style:italic;font-size:13px;line-height:14px;color:#cfcfcf">fx.</div>
<svg style="left:1522px;top:464px" width="12" height="12"><circle cx="6" cy="6" r="4.5" fill="none" stroke="#d8d8d8" stroke-width="1.6"/><path d="M3 3L9 9" stroke="#d8d8d8" stroke-width="1.6"/></svg>
<svg style="left:1545px;top:463px" width="12" height="13"><rect x="1" y="1" width="9" height="9" fill="#cfcfcf"/><rect x="3" y="4" width="5" height="8" fill="#9a9a9a"/></svg>
<svg style="left:1567px;top:463px" width="12" height="13"><path d="M1 2.5H11M4 2.5V1H8V2.5M2.5 3V12H9.5V3M5 5V10M7 5V10" stroke="#d0d0d0" stroke-width="1.2" fill="none"/></svg>
<!-- stroke panel header -->
<div class="a" style="left:1386px;top:480px;width:214px;height:2px;background:#3a3a3a"></div>
<div class="a" style="left:1386px;top:482px;width:214px;height:22px;background:#424242"></div>
<div class="a" style="left:1386px;top:482px;width:41px;height:22px;background:#535353"></div>
<svg style="left:1389px;top:488px" width="6" height="10"><path d="M1 4L3 1.5L5 4M1 6L3 8.5L5 6" stroke="#ccc" stroke-width="1" fill="none"/></svg>
<div class="t" style="left:1398px;top:486px;font-size:11px;line-height:13px;color:#e6e6e6">描边</div>
<svg style="left:1587px;top:489px" width="10" height="8"><path d="M0 1H10M0 4H10M0 7H10" stroke="#cfcfcf" stroke-width="1.2"/></svg>
<div class="a" style="left:1386px;top:504px;width:214px;height:234px;background:#535353"></div>
<div class="a" style="left:1386px;top:504px;width:3px;height:234px;background:#4a4a4a"></div>
<div class="t" style="left:1411px;top:512px;font-size:10.5px;line-height:13px;color:#e0e0e0">粗细：</div>
<div class="a" style="left:1443px;top:509px;width:15px;height:19px;background:#474747"></div>
<svg style="left:1446px;top:511px" width="9" height="16"><path d="M1 5L4.5 1.5L8 5M1 11L4.5 14.5L8 11" stroke="#dcdcdc" stroke-width="1.4" fill="none"/></svg>
<div class="a" style="left:1459px;top:510px;width:42px;height:17px;background:#444"></div>
<div class="a" style="left:1502px;top:510px;width:14px;height:17px;background:#474747"></div>
<svg style="left:1505px;top:516px" width="8" height="6"><path d="M1 1L4 4L7 1" stroke="#e0e0e0" stroke-width="1.6" fill="none"/></svg>
<div class="t" style="left:1411px;top:535px;font-size:11px;line-height:13px;color:#6c6c6c">端点:</div>
<div class="t" style="left:1411px;top:558px;font-size:11px;line-height:13px;color:#6c6c6c">边角:</div>
<div class="t" style="left:1391px;top:581px;font-size:11px;line-height:13px;color:#6c6c6c">对齐描边:</div>
<div class="t" style="left:1524px;top:558px;font-size:11px;line-height:13px;color:#6c6c6c">限制:</div>
<div class="a" style="left:1556px;top:553px;width:35px;height:22px;background:#565656;border:1px solid #4e4e4e"></div>
<div class="t" style="left:1593px;top:560px;font-size:9px;line-height:10px;color:#6c6c6c">x</div>
<div class="a" style="left:1441px;top:530px;width:61px;height:22px;border:1px solid #4b4b4b"></div>
<div class="a" style="left:1461px;top:531px;width:1px;height:20px;background:#4e4e4e"></div><div class="a" style="left:1481px;top:531px;width:1px;height:20px;background:#4e4e4e"></div>
<div class="a" style="left:1441px;top:553px;width:61px;height:22px;border:1px solid #4b4b4b"></div>
<div class="a" style="left:1461px;top:554px;width:1px;height:20px;background:#4e4e4e"></div><div class="a" style="left:1481px;top:554px;width:1px;height:20px;background:#4e4e4e"></div>
<div class="a" style="left:1441px;top:576px;width:61px;height:22px;border:1px solid #4b4b4b"></div>
<div class="a" style="left:1461px;top:577px;width:1px;height:20px;background:#4e4e4e"></div><div class="a" style="left:1481px;top:577px;width:1px;height:20px;background:#4e4e4e"></div>
<svg style="left:1446px;top:535px" width="12" height="12"><rect x="4" y="2" width="6" height="9" fill="#7a7a7a"/><rect x="1" y="4" width="3" height="5" fill="#7a7a7a"/></svg>
<svg style="left:1466px;top:535px" width="12" height="12"><path d="M10 2H6A4.5 4.5 0 0 0 6 11H10Z" fill="#7a7a7a"/><rect x="6" y="5" width="4" height="3" fill="#535353"/></svg>
<svg style="left:1486px;top:535px" width="12" height="12"><rect x="1" y="2" width="9" height="9" fill="#7a7a7a"/><rect x="4" y="5" width="6" height="3" fill="#535353"/></svg>
<svg style="left:1446px;top:558px" width="12" height="12"><path d="M1 1H10V4H4V11H1Z" fill="#7a7a7a"/><rect x="6" y="6" width="4" height="5" fill="#7a7a7a"/></svg>
<svg style="left:1466px;top:558px" width="12" height="12"><path d="M1 11V6A5 5 0 0 1 6 1H10V4H6A2 2 0 0 0 4 6V11Z" fill="#7a7a7a"/><rect x="7" y="7" width="3" height="4" fill="#7a7a7a"/></svg>
<svg style="left:1486px;top:558px" width="12" height="12"><path d="M1 11V5L5 1H10V4H6L4 6V11Z" fill="#7a7a7a"/><rect x="7" y="7" width="3" height="4" fill="#7a7a7a"/></svg>
<svg style="left:1446px;top:581px" width="12" height="12"><rect x="2" y="1" width="2" height="10" fill="#7a7a7a"/><rect x="2" y="9" width="9" height="2" fill="#7a7a7a"/><rect x="5" y="5" width="5" height="3" fill="#7a7a7a"/></svg>
<svg style="left:1466px;top:581px" width="12" height="12"><rect x="3" y="1" width="2" height="10" fill="#7a7a7a"/><rect x="3" y="9" width="8" height="2" fill="#7a7a7a"/><rect x="5" y="5" width="5" height="3" fill="#7a7a7a"/></svg>
<svg style="left:1486px;top:581px" width="12" height="12"><rect x="1" y="1" width="9" height="10" fill="#7a7a7a"/><rect x="3" y="3" width="7" height="6" fill="#535353"/><rect x="4" y="5" width="6" height="3" fill="#7a7a7a"/></svg>
<div class="a" style="left:1391px;top:600px;width:205px;height:1px;background:#4a4a4a"></div>
<div class="a" style="left:1391px;top:612px;width:11px;height:10px;background:#d8d8d8"></div>
<div class="a" style="left:1393px;top:616px;width:7px;height:2px;background:#555"></div>
<div class="t" style="left:1406px;top:611px;font-size:11px;line-height:13px;color:#e0e0e0">虚线</div>
<div class="a" style="left:1531px;top:608px;width:29px;height:18px;border:1px solid #4a4a4a"></div>
<div class="a" style="left:1566px;top:608px;width:29px;height:18px;border:1px solid #4a4a4a"></div>
<svg style="left:1535px;top:612px" width="22" height="10"><path d="M1 1H6M9 1H13M16 1H21M1 9H6M9 9H13M16 9H21M1 1V9M21 1V9" stroke="#6a6a6a" stroke-width="1.5" fill="none" stroke-dasharray="3 2"/></svg>
<svg style="left:1570px;top:612px" width="22" height="10"><path d="M1 1H21V9H1Z" stroke="#6a6a6a" stroke-width="1.5" fill="none" stroke-dasharray="4 2"/></svg>
<div class="a" style="left:1392px;top:631px;width:29px;height:17px;background:#585858;border:1px solid #4c4c4c"></div>
<div class="t" style="left:1396px;top:650px;font-size:11px;line-height:13px;color:#6a6a6a">虚线</div>
<div class="a" style="left:1427px;top:631px;width:29px;height:17px;background:#585858;border:1px solid #4c4c4c"></div>
<div class="t" style="left:1431px;top:650px;font-size:11px;line-height:13px;color:#6a6a6a">间隙</div>
<div class="a" style="left:1461px;top:631px;width:29px;height:17px;background:#585858;border:1px solid #4c4c4c"></div>
<div class="t" style="left:1465px;top:650px;font-size:11px;line-height:13px;color:#6a6a6a">虚线</div>
<div class="a" style="left:1496px;top:631px;width:29px;height:17px;background:#585858;border:1px solid #4c4c4c"></div>
<div class="t" style="left:1500px;top:650px;font-size:11px;line-height:13px;color:#6a6a6a">间隙</div>
<div class="a" style="left:1530px;top:631px;width:29px;height:17px;background:#585858;border:1px solid #4c4c4c"></div>
<div class="t" style="left:1534px;top:650px;font-size:11px;line-height:13px;color:#6a6a6a">虚线</div>
<div class="a" style="left:1565px;top:631px;width:29px;height:17px;background:#585858;border:1px solid #4c4c4c"></div>
<div class="t" style="left:1569px;top:650px;font-size:11px;line-height:13px;color:#6a6a6a">间隙</div>
<div class="a" style="left:1391px;top:665px;width:205px;height:1px;background:#4a4a4a"></div>
<div class="t" style="left:1411px;top:675px;font-size:11px;line-height:13px;color:#6c6c6c">箭头:</div>
<div class="a" style="left:1442px;top:672px;width:33px;height:18px;background:#7a7a7a"></div>
<svg style="left:1480px;top:679px" width="8" height="6"><path d="M1 1L4 4L7 1" stroke="#6a6a6a" stroke-width="1.4" fill="none"/></svg>
<div class="a" style="left:1496px;top:672px;width:34px;height:18px;background:#7a7a7a"></div>
<svg style="left:1534px;top:679px" width="8" height="6"><path d="M1 1L4 4L7 1" stroke="#6a6a6a" stroke-width="1.4" fill="none"/></svg>
<svg style="left:1578px;top:674px" width="14" height="12"><path d="M1 4H12M9 1L12 4M13 8H2M5 11L2 8" stroke="#6a6a6a" stroke-width="1.3" fill="none"/></svg>
<div class="t" style="left:1411px;top:700px;font-size:11px;line-height:13px;color:#6c6c6c">缩放:</div>
<div class="t" style="left:1411px;top:725px;font-size:11px;line-height:13px;color:#6c6c6c">对齐:</div>
<!-- watermark -->
<svg style="left:1420px;top:680px" width="80" height="58">
<path d="M5 27L48 4L63 15L63 21L48 11L12 29Z" fill="#fff"/>
<path d="M18 22H27V47H18Z" fill="#fff"/>
<path d="M27 21L57 17L62 19L62 23L30 27V30H58L55 34H30V37H60L56 41H30V43H55L62 39V43L55 47H27Z" fill="#fff"/>
<path d="M27 27H35V32H27ZM27 37H35V42H27Z" fill="#535353"/>
<g fill="#fff"><rect x="58" y="18" width="3" height="3"/><rect x="62" y="21" width="3" height="3"/><rect x="66" y="24" width="3" height="3"/><rect x="62" y="27" width="3" height="3"/><rect x="66" y="30" width="3" height="3"/><rect x="60" y="33" width="3" height="3"/><rect x="64" y="36" width="3" height="3"/><rect x="68" y="39" width="3" height="3"/></g>
</svg>
<div class="t" style="left:1499px;top:692px;font-size:20px;line-height:24px;color:#fff;font-weight:bold;-webkit-text-stroke:0.7px #fff;transform:scaleX(1.12);transform-origin:0 0">系统之家</div>
<div class="t" style="left:1490px;top:719px;font-size:10.5px;line-height:12px;color:#fff;font-family:'Liberation Serif',serif;letter-spacing:0.2px">XITONGZHIJIA.NET</div>

</body></html>
